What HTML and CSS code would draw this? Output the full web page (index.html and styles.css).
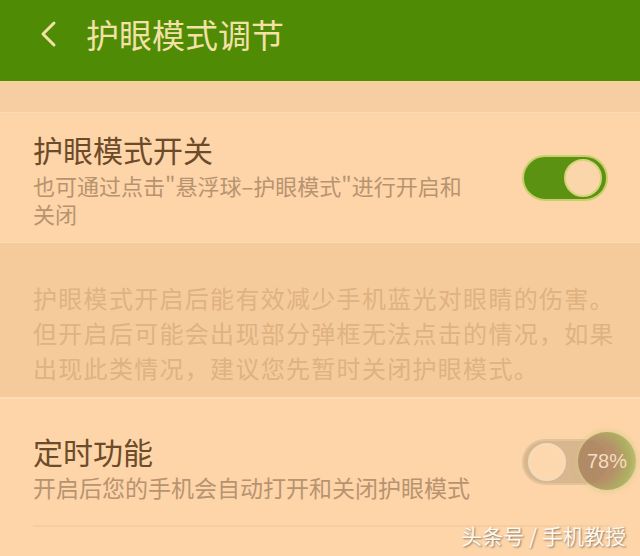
FILE: index.html
```html
<!DOCTYPE html>
<html lang="zh-CN">
<head>
  <meta charset="UTF-8" />
  <meta name="viewport" content="width=device-width, initial-scale=1.0" />
  <title>护眼模式调节</title>
  <link rel="stylesheet" href="styles.css">
</head>
<body>
  <div class="topbar">
    <span class="back">
      <svg width="20" height="28" viewBox="0 0 20 28"><path d="M16 3 L5 14 L16 25" fill="none" stroke="#f3e1a6" stroke-width="3" stroke-linecap="round" stroke-linejoin="round"/></svg>
    </span>
    <h1>护眼模式调节</h1>
  </div>

  <div class="spacer"></div>

  <div class="row">
    <div class="row-text">
      <div class="row-title">护眼模式开关</div>
      <div class="row-sub">也可通过点击"悬浮球–护眼模式"进行开启和关闭</div>
    </div>
    <div class="switch on"><span class="knob"></span></div>
  </div>

  <div class="notice">
    护眼模式开启后能有效减少手机蓝光对眼睛的伤害。<br>
    但开启后可能会出现部分弹框无法点击的情况，如果<br>
    出现此类情况，建议您先暂时关闭护眼模式。
  </div>

  <div class="row second">
    <div class="row-text">
      <div class="row-title">定时功能</div>
      <div class="row-sub">开启后您的手机会自动打开和关闭护眼模式</div>
    </div>
    <div class="switch off"><span class="knob"></span></div>
    <div class="ball">78%</div>
  </div>

  <div class="bottom-line"></div>
  <div class="watermark">头条号 / 手机教授</div>
</body>
</html>
```

FILE: styles.css
```css
:root {
  --bg: #fdd5a9;
  --green: #4f8b05;
  --title: #6c4b2a;
  --sub: #b89370;
}

body {
  margin: 0;
  background: var(--bg);
  font-family: "Noto Sans CJK SC", "Noto Sans", sans-serif;
  overflow: hidden;
  height: 556px;
  position: relative;
}

.topbar {
  height: 83px;
  background: var(--green);
  display: flex;
  align-items: center;
  border-bottom: 2px solid #f1d49c;
  box-sizing: border-box;
}

.back {
  display: flex;
  margin-left: 38px;
  margin-top: -14px;
}

.topbar h1 {
  margin: -14px 0 0 28px;
  font-size: 33px;
  font-weight: normal;
  color: #f3e1a6;
}

.spacer {
  height: 29px;
  background: #f7cea2;
  border-bottom: 1px solid #fbdbb5;
}

.row {
  display: flex;
  align-items: center;
  padding: 0 32px 0 33px;
  height: 130px;
  box-sizing: border-box;
  border-bottom: 1px solid #fbdcb7;
  position: relative;
}

.row-text {
  width: 445px;
}

.row-title {
  font-size: 30px;
  line-height: 40px;
  color: var(--title);
}

.row-sub {
  font-size: 22px;
  line-height: 28px;
  color: var(--sub);
  margin-top: 2px;
}

.switch {
  margin-left: auto;
  width: 86px;
  height: 46px;
  border-radius: 23px;
  box-sizing: border-box;
  display: flex;
  align-items: center;
  padding: 0 4px;
}

.switch.on {
  background: #5b9212;
  border: 2px solid #c9cf6a;
  justify-content: flex-end;
}

.switch.on .knob {
  width: 38px;
  height: 38px;
  border-radius: 50%;
  background: #fbd6ab;
  border: 2px solid #d7d37a;
  box-sizing: border-box;
}

.switch.off {
  background: #d9b68e;
  border: 2px solid #e2c39c;
}

.switch.off .knob {
  width: 38px;
  height: 38px;
  border-radius: 50%;
  background: #fdd8ae;
  border: 2px solid #f3dcbd;
  box-sizing: border-box;
}

.notice {
  background: #f6cb9c;
  height: 156px;
  box-sizing: border-box;
  padding: 37px 10px 0 33px;
  font-size: 24px;
  line-height: 35px;
  letter-spacing: 1.3px;
  color: #dfb281;
  border-bottom: 2px solid #fbdcb7;
}

.row.second {
  height: 126px;
  padding-top: 7px;
  border-bottom: none;
}

.row.second .row-sub {
  font-size: 23px;
  white-space: nowrap;
}

.row.second .switch {
  margin-top: -7px;
}

.ball {
  position: absolute;
  left: 578px;
  top: 33px;
  width: 58px;
  height: 58px;
  border-radius: 50%;
  background: radial-gradient(circle at 30% 50%, rgba(170, 130, 95, 0.85) 0 40%, rgba(160, 170, 85, 0.85) 70%, rgba(200, 200, 120, 0.55) 100%);
  box-shadow: 0 0 4px 2px rgba(210, 205, 130, 0.5);
  color: #f6dcc0;
  font-family: "Liberation Sans", sans-serif;
  font-size: 20px;
  display: flex;
  align-items: center;
  justify-content: center;
}

.bottom-line {
  margin: 0 30px 0 33px;
  border-top: 2px solid #f6cda0;
}

.watermark {
  position: absolute;
  right: 14px;
  bottom: 6px;
  font-size: 21px;
  color: #fff8ee;
  text-shadow: 1px 1px 2px rgba(0, 0, 0, 0.45);
}
```
